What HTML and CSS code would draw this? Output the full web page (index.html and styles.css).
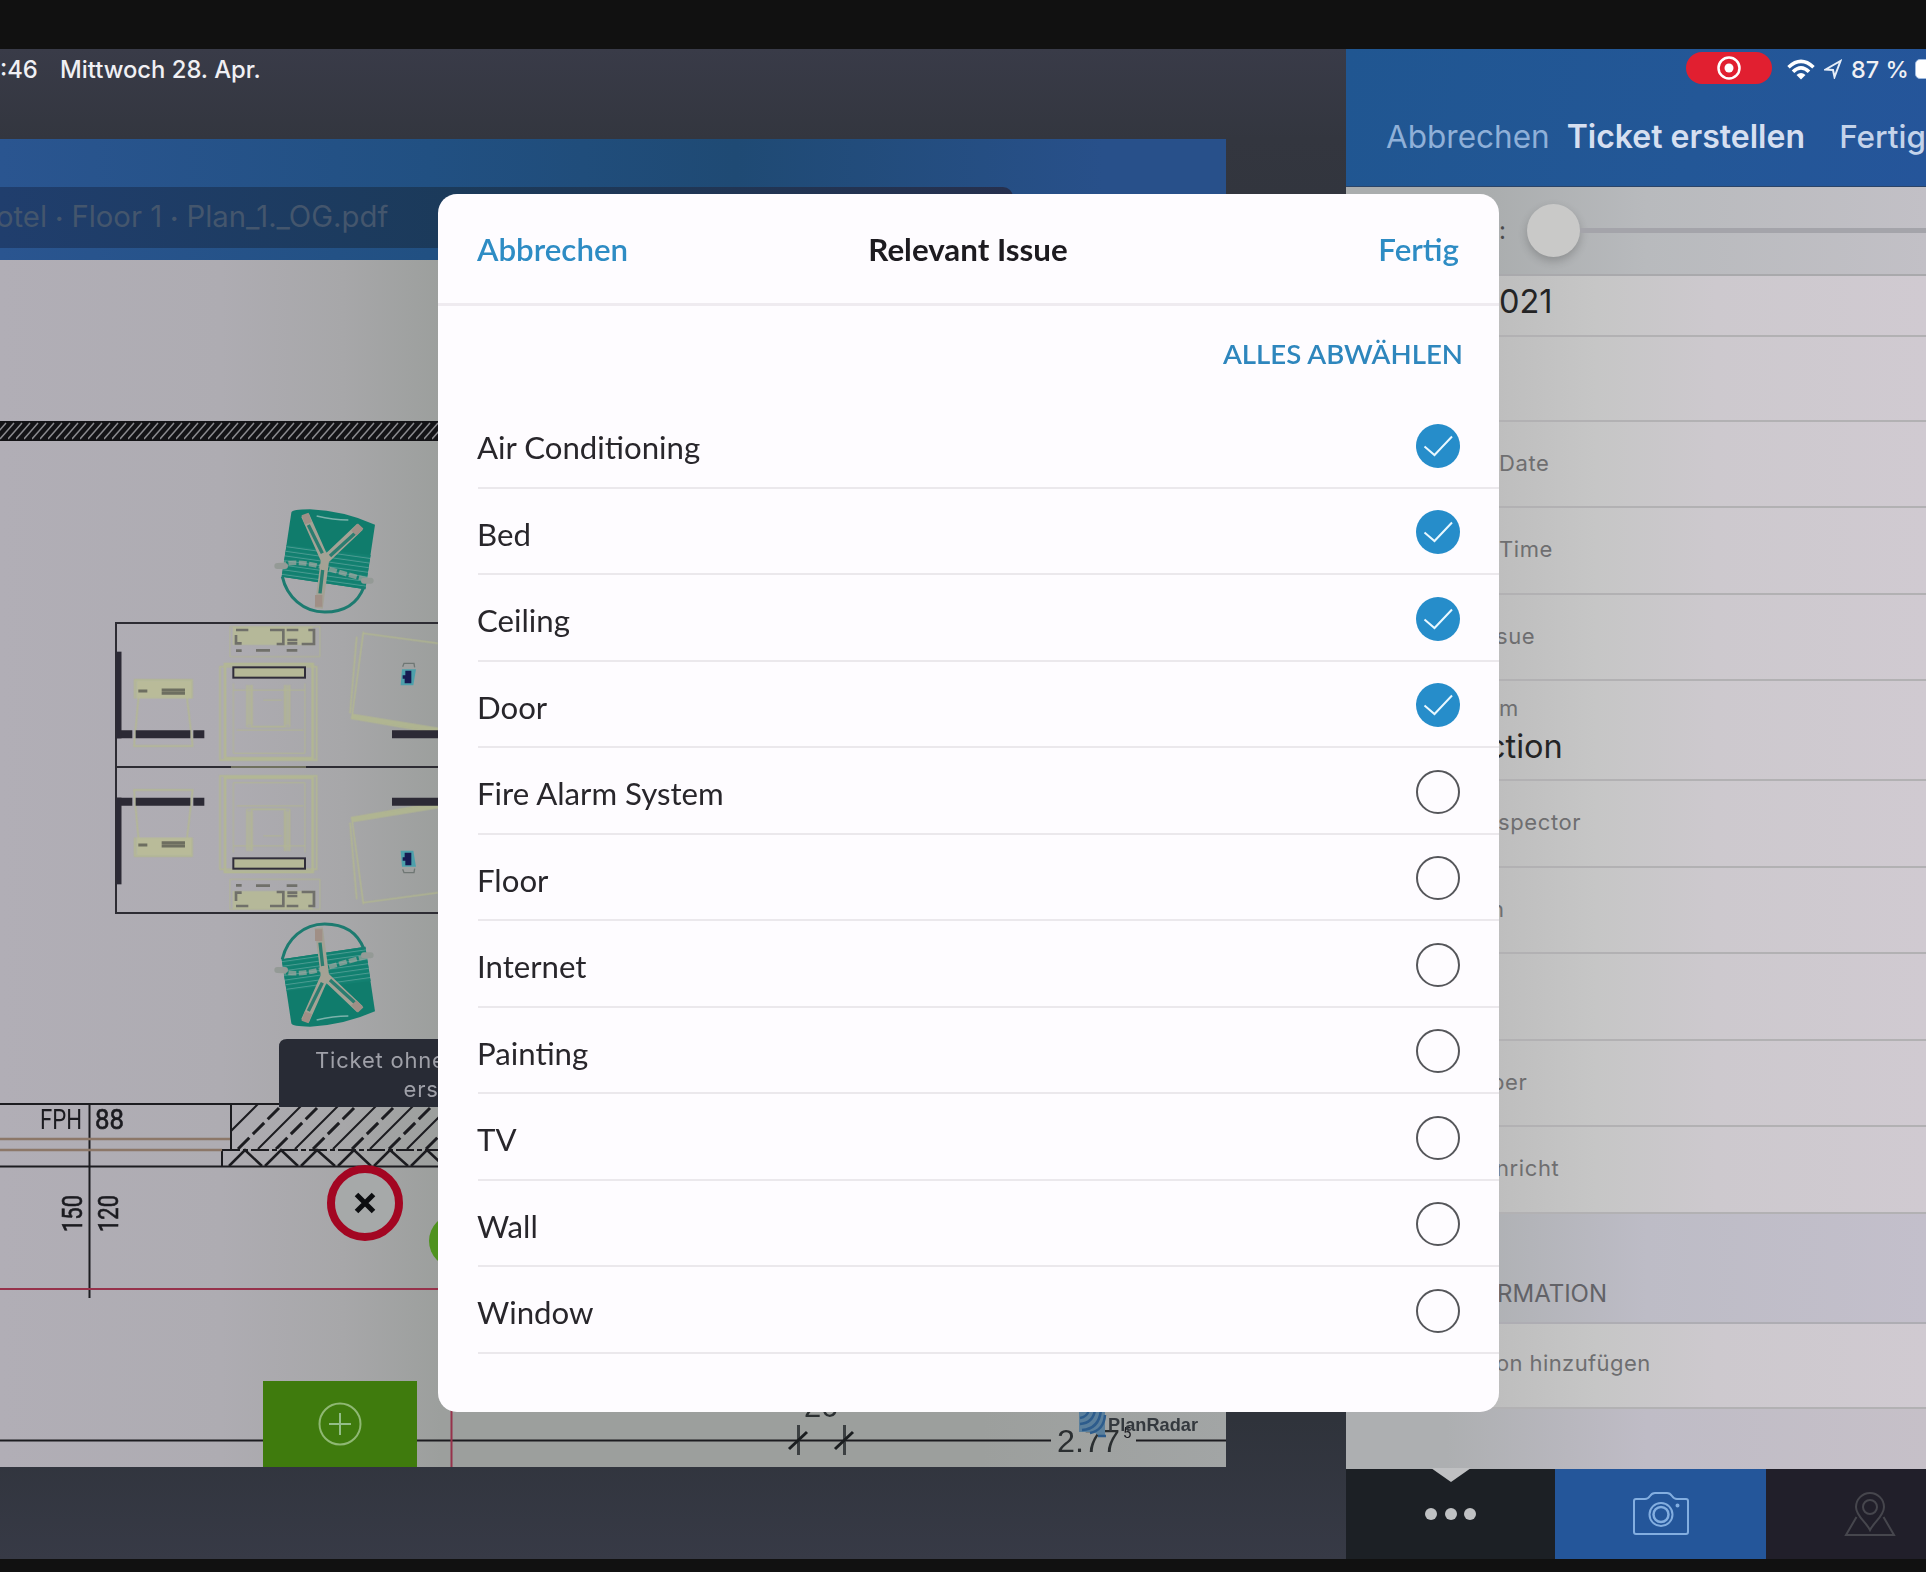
FILE: index.html
```html
<!DOCTYPE html>
<html lang="de">
<head>
<meta charset="utf-8">
<title>Ticket erstellen</title>
<link rel="stylesheet" href="styles.css">
</head>
<body>
<div class="screen">
  <section class="plan-pane">
    <div class="status status-left"><span class="clock">:46</span><span class="date">Mittwoch 28. Apr.</span></div>
    <div class="plan-window">
      <header class="plan-header"><div class="breadcrumb"><span class="crumbs">otel <b>•</b> Floor 1 <b>•</b> Plan_1._OG.pdf</span></div></header>
      <svg class="plan" viewBox="0 260 1226 1207" width="1226" height="1207">
        <defs>
          <linearGradient id="paper" x1="0" x2="1" y1="0" y2="0">
            <stop offset="0" stop-color="#b1aeb6"/><stop offset=".18" stop-color="#aeacb2"/><stop offset=".28" stop-color="#a7a7a9"/>
            <stop offset=".36" stop-color="#9c9f9d"/><stop offset=".8" stop-color="#9c9f9d"/><stop offset="1" stop-color="#a2a5a5"/>
          </linearGradient>
          <pattern id="fine" width="8" height="20" patternUnits="userSpaceOnUse" y="421">
            <rect width="8" height="20" fill="#131316"/>
            <path d="M-8 18L6 2M0 18L14 2M-16 18L-2 2" stroke="#8a8a8e" stroke-width="1.500"/>
          </pattern>
          <pattern id="ribs" width="10" height="14" patternUnits="userSpaceOnUse" patternTransform="rotate(8)">
            <rect width="10" height="14" fill="#128070"/><path d="M0 4H10" stroke="#4c9c92" stroke-width="3"/>
          </pattern>
          <clipPath id="wall"><rect x="231" y="1105" width="210" height="44"/></clipPath>
          <g id="desk">
            <path d="M116 768V623H440" fill="none" stroke="#2d2c33" stroke-width="2"/>
            <g transform="translate(90 480) scale(.33333)" fill="none">
              <g stroke="#b5bb8b" stroke-width="7" opacity=".75">
                <path d="M135 655V600H305V655"/><path d="M146 645L132 798H308L290 645Z" stroke-width="5"/>
                <path d="M140 603H304V655H140Z" fill="#bcc191" stroke="none"/>
                <path d="M428 440H668V495H428Z" fill="#b9bd92" stroke="none"/>
                <path d="M420 440H690V530H420Z" stroke-width="3"/>
                <path d="M390 560H680V840H390Z" stroke-width="5"/><path d="M405 552H668V835H405Z" stroke-width="8"/>
                <path d="M430 610V820H645V610" stroke-width="3"/>
                <path d="M470 615V740H600V615M485 615V740H585V615M520 660H575M430 630H645M440 750H640" stroke-width="3"/>
                <path d="M480 615V735M590 615V735" stroke-width="18" opacity=".6"/>
                <path d="M820 455L785 715L1044 760M820 460L1044 490M800 470L780 700" stroke-width="5"/>
                <path d="M785 708L1044 750" stroke-width="14"/>
              </g>
              <path d="M145 633H172M215 630H285M215 640H285" stroke="#6d6e60" stroke-width="9"/>
              <path d="M438 450H475M540 450H580V492H560M590 450H625M655 450H672V492H635M438 465V490H455M592 480H622M592 490H622M438 512H455M498 511H540M590 511H622" stroke="#70706a" stroke-width="8"/>
              <rect x="430" y="562" width="215" height="31" stroke="#302d3a" stroke-width="6" fill="#b5b897"/>
              <path d="M80 763H127M137 763H301M310 763H343M906 763H1044" stroke="#2c2a35" stroke-width="24"/>
              <path d="M86 515V775" stroke="#2c2a35" stroke-width="17"/>
              <path d="M936 568H978L970 616H932Z" fill="#4da0ab"/><path d="M946 572H964V610H944V596H938V586H946Z" fill="#161a52"/>
              <path d="M938 560L942 550H972L974 562" stroke="#6f7774" stroke-width="4"/>
              <path d="M604 98Q606 88 660 88Q760 92 855 134L826 328L575 290Z" fill="#107c6c"/>
              <path d="M590 195L842 225L826 328L575 290Z" fill="url(#ribs)"/>
              <path d="M577 290C590 350 640 396 704 396S805 365 822 320" stroke="#1d7b70" stroke-width="9"/>
              <path d="M565 256Q620 238 700 262T835 300" stroke="#a4a6a1" stroke-width="14" stroke-dasharray="24 7" opacity=".7"/>
              <path d="M645 105L705 240M810 140L705 240L686 385" stroke="#a4a295" stroke-width="25"/>
              <path d="M655 135L697 220M795 160L720 228M698 270L690 340" stroke="#2b7d70" stroke-width="10"/>
              <path d="M645 102L655 130M812 138L792 160M686 345V380" stroke="#a08f86" stroke-width="22"/>
              <path d="M562 258H585M822 302H842" stroke="#949a96" stroke-width="18" stroke-linecap="round"/>
              <path d="M680 108Q730 120 775 120" stroke="#7bb2ab" stroke-width="5"/>
            </g>
          </g>
        </defs>
        <rect y="260" width="1226" height="1207" fill="url(#paper)"/>
        <rect y="421" width="440" height="20" fill="url(#fine)"/>
        <use href="#desk"/>
        <use href="#desk" transform="translate(0 1536) scale(1 -1)"/>
        <path d="M116 767H231M306 767H440" stroke="#2d2c33" stroke-width="2"/>
        <path d="M231 767H306" stroke="#6f705f" stroke-width="2"/>
        <g fill="none" stroke="#1c1c20" stroke-width="2">
          <path d="M0 1104H440M0 1166.500H440M231 1104V1149M222 1150V1166M89.500 1104V1298M0 1440.500H1051M1136 1440.500H1226"/>
          <path d="M222 1150H440" stroke-dasharray="18 3 5 3"/>
          <path d="M229 1166L245 1150L262 1166M265 1166L281 1150L298 1166M301 1166L317 1150L335 1166M338 1166L354 1150L371 1166M374 1166L390 1150L408 1166M411 1166L427 1150L444 1166" stroke-width="2.500"/>
          <g clip-path="url(#wall)">
            <path d="M213 1149L258 1104M258 1149L303 1104M295 1149L340 1104M333 1149L378 1104M370 1149L415 1104M407 1149L452 1104"/>
            <path d="M238 1149L283 1104M276 1149L321 1104M313 1149L358 1104M352 1149L397 1104M389 1149L434 1104M426 1149L471 1104" stroke-width="3" stroke-dasharray="16 5"/>
          </g>
        </g>
        <path d="M0 1139H230M0 1150H222" stroke="#8c7768" stroke-width="2.500"/>
        <path d="M0 1289H440M451.500 1400V1467" stroke="#96324b" stroke-width="2" fill="none"/>
        <g class="plan-text">
          <text x="40" y="1128.500" textLength="42" lengthAdjust="spacingAndGlyphs">FPH</text>
          <text class="strong" x="95" y="1128.500" textLength="29" lengthAdjust="spacingAndGlyphs">88</text>
          <text class="strong" transform="translate(82 1232) rotate(-90)" textLength="37" lengthAdjust="spacingAndGlyphs">150</text>
          <text class="strong" transform="translate(118 1232) rotate(-90)" textLength="37" lengthAdjust="spacingAndGlyphs">120</text>
          <text class="dim" x="804" y="1417">20</text>
          <text class="dim" x="1057" y="1451.500" textLength="63" lengthAdjust="spacingAndGlyphs">2.77</text>
          <text class="tiny" x="1123" y="1438">5</text>
        </g>
        <path d="M798.500 1425V1455M844.500 1425V1455" stroke="#3c4042" stroke-width="3"/>
        <path d="M789 1449L807 1432M835 1449L853 1432" stroke="#1b1e20" stroke-width="3"/>
        <g fill="none" stroke="#2d5c8c" stroke-width="2.500">
          <path d="M1079 1405H1105V1436H1099L1094 1432H1079Z" fill="#5a7f9c" stroke="none"/>
          <path d="M1080 1418Q1087 1417 1089 1410M1080 1424Q1093 1423 1095 1410M1082 1430Q1099 1429 1101 1410M1090 1433Q1104 1430 1105 1415M1098 1436H1106"/>
        </g>
        <text class="brand" x="1108" y="1431" textLength="90" lengthAdjust="spacingAndGlyphs">PlanRadar</text>
        <circle cx="456" cy="1241" r="27" fill="#4f921f"/>
        <circle cx="365" cy="1203" r="34" fill="#a6a9a9" stroke="#a30622" stroke-width="8"/>
        <path d="M356.500 1194.500L373.500 1211.500M373.500 1194.500L356.500 1211.500" stroke="#0c0e10" stroke-width="5"/>
        <path d="M440 1039H287Q279 1039 279 1047V1107H440Z" fill="#282b35"/>
        <g class="tip-text">
          <text x="315" y="1067.500">Ticket ohne</text>
          <text x="403.500" y="1097">erst</text>
        </g>
        <rect x="263" y="1381" width="154" height="86" fill="#3f7b0d"/>
        <circle cx="340" cy="1424" r="20.500" fill="none" stroke="#8fb873" stroke-width="2"/>
        <path d="M329 1424H351M340 1413V1435" stroke="#93bd87" stroke-width="2"/>
      </svg>
    </div>
  </section>

  <section class="ticket-pane">
    <header class="ticket-header">
      <div class="status status-right">
        <span class="rec"><svg width="26" height="26" viewBox="0 0 26 26"><circle cx="13" cy="13" r="10.500" fill="none" stroke="#fff" stroke-width="2.500"/><circle cx="13" cy="13" r="4.500" fill="#fff"/></svg></span>
        <svg class="wifi" width="28" height="21" viewBox="0 0 28 21" fill="none" stroke="#fff" stroke-width="3.600"><path d="M1.500 8.200Q14-3.500 26.500 8.200M6 12.800Q14 5 22 12.800"/><path d="M9.500 16L14 20.500L18.500 16Q14 12 9.500 16Z" fill="#fff" stroke="none"/></svg>
        <svg class="loc" width="18" height="20" viewBox="0 0 18 20" fill="none" stroke="#e6edf7" stroke-width="2"><path d="M1.500 10.500L16.500 2L10.500 18L9 11Z"/></svg>
        <span class="percent">87 %</span><span class="battery"></span>
      </div>
      <nav class="ticket-nav"><span class="cancel">Abbrechen</span><span class="title">Ticket erstellen</span><span class="done">Fertig</span></nav>
    </header>
    <div class="form">
      <div class="slider"><span class="colon">:</span><span class="thumb"></span><span class="track"></span></div>
      <div class="row row-year"><span class="value">021</span></div>
      <div class="row row-blank"></div>
      <div class="row row-a">Date</div>
      <div class="row row-b">Time</div>
      <div class="row row-a"><span class="pull-1">sue</span></div>
      <div class="row row-two"><span>m</span><span class="value">ction</span></div>
      <div class="row row-b"><span class="pull-0">spector</span></div>
      <div class="row row-a"><span class="pull-2">n</span></div>
      <div class="row row-b"></div>
      <div class="row row-a"><span class="pull-2">ber</span></div>
      <div class="row row-b"><span class="pull-1">nricht</span></div>
      <div class="group-title">RMATION</div>
      <div class="row row-add"><span class="pull-1">on hinzufügen</span></div>
      <div class="filler"></div>
    </div>
    <footer class="tabs">
      <div class="tab tab-more"><i></i><i></i><i></i></div>
      <div class="tab tab-camera"><svg width="58" height="46" viewBox="0 0 58 46" fill="none" stroke="#83aee0" stroke-width="2"><path d="M2 10Q2 8 4 8H13Q16 8 18 5Q20 2 23 2H35Q38 2 40 5Q42 8 45 8H54Q56 8 56 10V41Q56 43 54 43H4Q2 43 2 41Z"/><circle cx="29" cy="23.500" r="11.500"/><circle cx="29" cy="23.500" r="7.500" stroke-width="2.500"/><circle cx="45.500" cy="14.500" r="1" /></svg></div>
      <div class="tab tab-pin"><svg width="52" height="46" viewBox="0 0 52 46" fill="none" stroke="#46464d" stroke-width="2"><path d="M26 39C22 31 12 25 12 16A14 14 0 0 1 40 16C40 25 30 31 26 39Z"/><circle cx="26" cy="16" r="7"/><path d="M12.500 26L2 44H50L39.500 26"/></svg></div>
    </footer>
  </section>

  <div class="modal">
    <header class="modal-header"><span class="link">Abbrechen</span><span class="modal-title">Relevant Issue</span><span class="link">Fertig</span></header>
    <div class="toggle-all">ALLES ABWÄHLEN</div>
    <ul class="options">
      <li><span>Air Conditioning</span><svg class="check on" viewBox="0 0 44 44"><circle cx="22" cy="22" r="22"/><path d="M8.500 22.500L18.500 31L36 12.500"/></svg></li>
      <li><span>Bed</span><svg class="check on" viewBox="0 0 44 44"><circle cx="22" cy="22" r="22"/><path d="M8.500 22.500L18.500 31L36 12.500"/></svg></li>
      <li><span>Ceiling</span><svg class="check on" viewBox="0 0 44 44"><circle cx="22" cy="22" r="22"/><path d="M8.500 22.500L18.500 31L36 12.500"/></svg></li>
      <li><span>Door</span><svg class="check on" viewBox="0 0 44 44"><circle cx="22" cy="22" r="22"/><path d="M8.500 22.500L18.500 31L36 12.500"/></svg></li>
      <li><span>Fire Alarm System</span><svg class="check" viewBox="0 0 44 44"><circle cx="22" cy="22" r="21"/></svg></li>
      <li><span>Floor</span><svg class="check" viewBox="0 0 44 44"><circle cx="22" cy="22" r="21"/></svg></li>
      <li><span>Internet</span><svg class="check" viewBox="0 0 44 44"><circle cx="22" cy="22" r="21"/></svg></li>
      <li><span>Painting</span><svg class="check" viewBox="0 0 44 44"><circle cx="22" cy="22" r="21"/></svg></li>
      <li><span>TV</span><svg class="check" viewBox="0 0 44 44"><circle cx="22" cy="22" r="21"/></svg></li>
      <li><span>Wall</span><svg class="check" viewBox="0 0 44 44"><circle cx="22" cy="22" r="21"/></svg></li>
      <li><span>Window</span><svg class="check" viewBox="0 0 44 44"><circle cx="22" cy="22" r="21"/></svg></li>
    </ul>
  </div>
</div>
</body>
</html>
```
FILE: styles.css
```css
* { box-sizing: border-box; }
body { margin: 0; background: #111; height: 1572px; padding-top: 49px; overflow: hidden; font-family: Inter, "Liberation Sans", sans-serif; }
.screen { position: relative; display: flex; width: 1926px; height: 1510px; overflow: hidden; }

/* floor plan side */
.plan-pane { width: 1346px; flex: none; background: linear-gradient(180deg, #393b48 0, #33363f 90px, #2f333b 300px, #2f333b 1370px, #373a46 1510px); }
.status { display: flex; align-items: center; color: #f0f0f4; font-weight: 500; white-space: nowrap; }
.status-left { height: 90px; padding-bottom: 50px; font-size: 23.800px; }
.clock { width: 60px; }
.plan-window { width: 1226px; }
.plan-header { height: 121px; padding: 48px 0 12px; background: linear-gradient(90deg, #2a5590, #215082 35%, #1f4a74 60%, #28508a 90%); }
.breadcrumb { width: 1013px; height: 61px; padding-top: 12px; border-radius: 0 10px 10px 0; background: linear-gradient(90deg, #203e6d, #1b3a5a 45%, #26304e); color: #44566d; font-size: 29.300px; line-height: 36px; white-space: nowrap; }
.crumbs { margin-left: -4px; }
.crumbs b { font-size: 14px; font-weight: 400; line-height: 1; vertical-align: 4px; }
.plan { display: block; }
.plan-text text { font-family: Roboto, "Liberation Sans", sans-serif; font-size: 27px; fill: #1b1b20; }
.plan-text .strong { stroke: #1b1b20; stroke-width: .6px; }
.plan-text .dim { font-family: "Liberation Sans", sans-serif; font-size: 31px; fill: #2b2f31; }
.plan-text .tiny { font-size: 15px; }
.brand { font: 700 19px "Liberation Sans", sans-serif; fill: #34393e; }
.tip-text { font-size: 22px; letter-spacing: .8px; fill: #9fa0a8; }

/* ticket side */
.ticket-pane { width: 580px; flex: none; display: flex; flex-direction: column; overflow: hidden; }
.ticket-header { height: 138px; background: linear-gradient(100deg, #205691, #235797 60%, #25559a); border-bottom: 1px solid #2b4468; }
.status-right { height: 40px; padding-left: 340px; font-size: 23.500px; }
.status-right > * { flex: none; }
.rec { display: flex; align-items: center; justify-content: center; width: 86px; height: 32px; margin-top: -2px; border-radius: 16px; background: #e11f30; }
.wifi { margin-left: 15px; }
.loc { margin-left: 9px; }
.percent { margin-left: 9px; width: 64px; }
.battery { width: 30px; height: 20px; border-radius: 5px; background: #fff; border: 1px solid #9fbbe0; }
.ticket-nav { display: flex; padding: 29px 0 0 40px; font-size: 31.500px; line-height: 38px; white-space: nowrap; color: #c4d3ea; }
.cancel { width: 183px; color: #8fb0d8; }
.title { width: 276px; font-size: 32px; font-weight: 600; color: #d6dff0; }
.done { font-weight: 500; }
.form { height: 1282px; background: linear-gradient(90deg, #bdbdbd 140px, #c6c6c6 250px, #cdc9ce 370px, #d0cad1); }
.slider { display: flex; align-items: center; height: 89px; padding-left: 153px; background: linear-gradient(90deg, #aaadae 140px, #b8babd 300px, #c2c0c6); border-bottom: 2px solid #a9a9ac; }
.colon { width: 28px; font-size: 24px; color: #4a4a4c; }
.thumb { width: 53px; height: 53px; border-radius: 50%; background: #c9c9c8; box-shadow: 0 4px 10px #0003; }
.track { flex: 1; height: 5px; background: #a4a4aa; }
.row { display: flex; align-items: center; padding: 0 0 3px 153px; border-bottom: 2px solid #b2b1b3; font-size: 22px; letter-spacing: .6px; line-height: 28px; color: #6e6e70; white-space: nowrap; }
.value { font-size: 32.500px; letter-spacing: 0; line-height: 40px; color: #242425; }
.row-year { height: 61px; padding-bottom: 7px; }
.row-blank { height: 85px; }
.row-a { height: 86px; }
.row-b { height: 87px; }
.row-two { height: 100px; flex-direction: column; align-items: flex-start; justify-content: center; gap: 5px; padding-bottom: 0; }
.row-two .value { margin-left: -12px; }
.pull-0 { margin-left: -1px; }
.pull-1 { margin-left: -3px; }
.pull-2 { margin-left: -8px; }
.group-title { height: 110px; padding: 66px 0 0 151px; font-size: 24px; line-height: 28px; color: #626267; background: linear-gradient(90deg, #afb1b4 140px, #bdbcc6 300px, #c3bfcb); border-bottom: 2px solid #aeadb3; }
.row-add { height: 85px; padding-bottom: 5px; }
.row-add span { letter-spacing: .4px; }
.filler { height: 61px; background: linear-gradient(90deg, #adafb1 100px, #bfbcc6 300px, #c6c0c8); }
.tabs { display: flex; height: 90px; }
.tab { display: flex; align-items: center; justify-content: center; }
.tab-more { position: relative; width: 209px; gap: 7.500px; background: #1c2025; }
.tab-more::before { content: ""; position: absolute; left: 85px; top: -1px; border: solid transparent; border-width: 14px 20px 0; border-top-color: #bfc0c2; }
.tab-more i { width: 12px; height: 12px; border-radius: 50%; background: #bfc1c3; }
.tab-camera { width: 211px; background: #24569a; }
.tab-pin { width: 160px; background: #211f2a; padding-left: 48px; }

/* selection dialog */
.modal { position: absolute; left: 438px; top: 145px; width: 1061px; height: 1218px; border-radius: 19px; background: #fefcff; font-family: Lato, "Open Sans", sans-serif; overflow: hidden; color: #28262b; }
.modal-header { display: grid; grid-template-columns: 1fr auto 1fr; align-items: center; height: 112px; padding: 0 40px 0 39px; border-bottom: 3px solid #efebf0; font-size: 31.300px; }
.link { color: #2e8cc4; font-weight: 600; }
.link:last-child { text-align: right; }
.modal-title { font-weight: 700; color: #1d1b20; }
.toggle-all { height: 96px; padding: 29px 36px 0 0; text-align: right; font-size: 27.600px; line-height: 38px; font-weight: 600; color: #2e86bd; }
.options { list-style: none; margin: 0; padding: 0 0 0 40px; }
.options li { display: flex; align-items: center; justify-content: space-between; height: 86.500px; padding-right: 39px; border-bottom: 2px solid #ebe8ec; font-size: 31.200px; }
.options span { padding-top: 6px; margin-left: -1px; }
.check { width: 44px; height: 44px; margin-top: 3px; fill: none; stroke: #55565a; stroke-width: 2; }
.check.on { stroke: #e9f8ff; }
.check.on circle { fill: #268dca; stroke: none; }
```
